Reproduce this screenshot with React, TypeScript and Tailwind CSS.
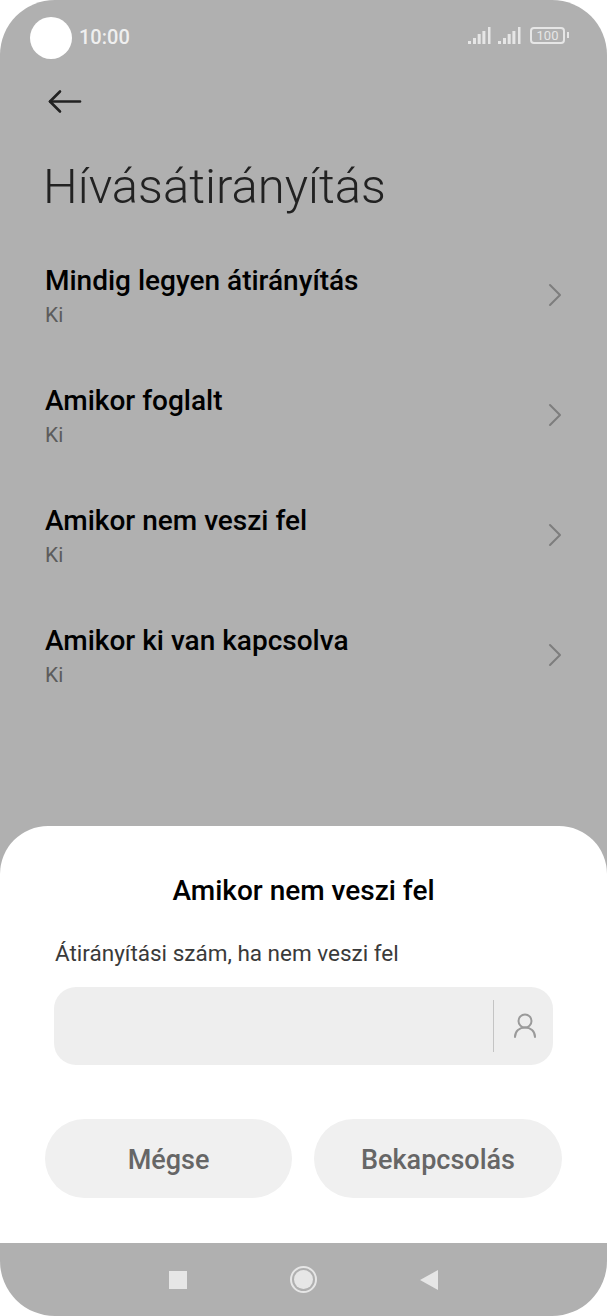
const rows = ["Mindig legyen átirányítás", "Amikor foglalt", "Amikor nem veszi fel", "Amikor ki van kapcsolva"];

function Signal() {
  return (
    <svg width="23" height="17" viewBox="0 0 23 17" fill="#e6e6e6">
      <rect x="0" y="14" width="3" height="3" />
      <rect x="5" y="11" width="3" height="6" />
      <rect x="9.7" y="7" width="3" height="10" />
      <rect x="14.4" y="4" width="3" height="13" />
      <rect x="20" y="0" width="2.5" height="17" />
    </svg>
  );
}

export default function App() {
  return (
    <div className="w-[607px] h-[1316px] bg-white font-['Roboto',sans-serif]">
      <div className="w-full h-full flex flex-col rounded-[55px] overflow-hidden bg-[#b0b0b0]">
        <div className="flex items-center h-[42px] mt-[17px] pl-[30px] pr-[38px]">
          <div className="w-[42px] h-[42px] rounded-full bg-white" />
          <span className="ml-[7px] mb-[2px] text-[20px] font-medium text-[#efefef]">10:00</span>
          <div className="ml-auto mb-[6px] flex items-center gap-[7px]">
            <Signal />
            <Signal />
            <div className="flex items-center gap-[2px] ml-[2px]">
              <div className="w-[35px] h-[17px] rounded-[4px] border-2 border-[#e6e6e6] flex items-center justify-center text-[13px] leading-none text-[#e6e6e6]">
                100
              </div>
              <div className="w-[2px] h-[6px] bg-[#e6e6e6]" />
            </div>
          </div>
        </div>

        <div className="pl-[48px] mt-[30px]">
          <svg width="34" height="26" viewBox="0 0 34 26" fill="none" stroke="#222222" strokeWidth="2.6" strokeLinecap="round" strokeLinejoin="round" className="block">
            <path d="M2 12.5H32" />
            <path d="M12 2.5L2 12.5L12 22.5" />
          </svg>
        </div>

        <h1 className="pl-[43px] mt-[42px] text-[49px] leading-[60px] font-light text-[#222222]">Hívásátirányítás</h1>

        <div className="mt-[22px] pl-[45px] pr-[45px]">
          {rows.map((label) => (
            <div key={label} className="flex items-center justify-between h-[120px] pb-[4px]">
              <div>
                <div className="text-[28px] leading-[37px] font-medium text-black">{label}</div>
                <div className="text-[21px] leading-[33px] text-[#5c5c5c]">Ki</div>
              </div>
              <svg width="14" height="24" viewBox="0 0 14 24" fill="none" stroke="#7d7d7d" strokeWidth="2" strokeLinecap="round" strokeLinejoin="round" className="mb-[4px]">
                <path d="M2 2L12 12L2 22" />
              </svg>
            </div>
          ))}
        </div>

        <div className="mt-auto bg-white rounded-t-[48px] h-[417px] shrink-0 flex flex-col">
          <div className="mt-[45px] text-center text-[28px] leading-[40px] font-medium text-black">Amikor nem veszi fel</div>
          <div className="mt-[27px] pl-[55px] text-[22.5px] leading-[30px] text-[#3a3a3a]">Átirányítási szám, ha nem veszi fel</div>
          <div className="mt-[19px] mx-[54px] h-[78px] rounded-[22px] bg-[#eeeeee] flex items-center justify-end">
            <div className="w-px h-[52px] bg-[#c4c4c4]" />
            <div className="w-[59px] pl-[3px] flex justify-center">
              <svg width="24" height="26" viewBox="0 0 24 26" fill="none" stroke="#9a9a9a" strokeWidth="2" strokeLinecap="round">
                <circle cx="12" cy="8" r="6.5" />
                <path d="M2 24c0-6 4.5-9.5 10-9.5S22 18 22 24" />
              </svg>
            </div>
          </div>
          <div className="mt-[54px] px-[45px] flex gap-[22px]">
            <button className="w-[247px] h-[79px] pt-[3px] rounded-full bg-[#f0f0f0] text-[27px] font-medium text-[#666666]">Mégse</button>
            <button className="flex-1 h-[79px] pt-[3px] rounded-full bg-[#f0f0f0] text-[27px] font-medium text-[#666666]">Bekapcsolás</button>
          </div>
        </div>

        <div className="h-[73px] shrink-0 flex items-center justify-center gap-[103px]">
          <div className="w-[18px] h-[18px] bg-[#e6e6e6]" />
          <div className="w-[27px] h-[27px] rounded-full border-2 border-[#e6e6e6] flex items-center justify-center">
            <div className="w-[19px] h-[19px] rounded-full bg-[#e6e6e6]" />
          </div>
          <svg width="18" height="20" viewBox="0 0 18 20" fill="#e6e6e6">
            <path d="M18 0V20L0 10Z" />
          </svg>
        </div>
      </div>
    </div>
  );
}
